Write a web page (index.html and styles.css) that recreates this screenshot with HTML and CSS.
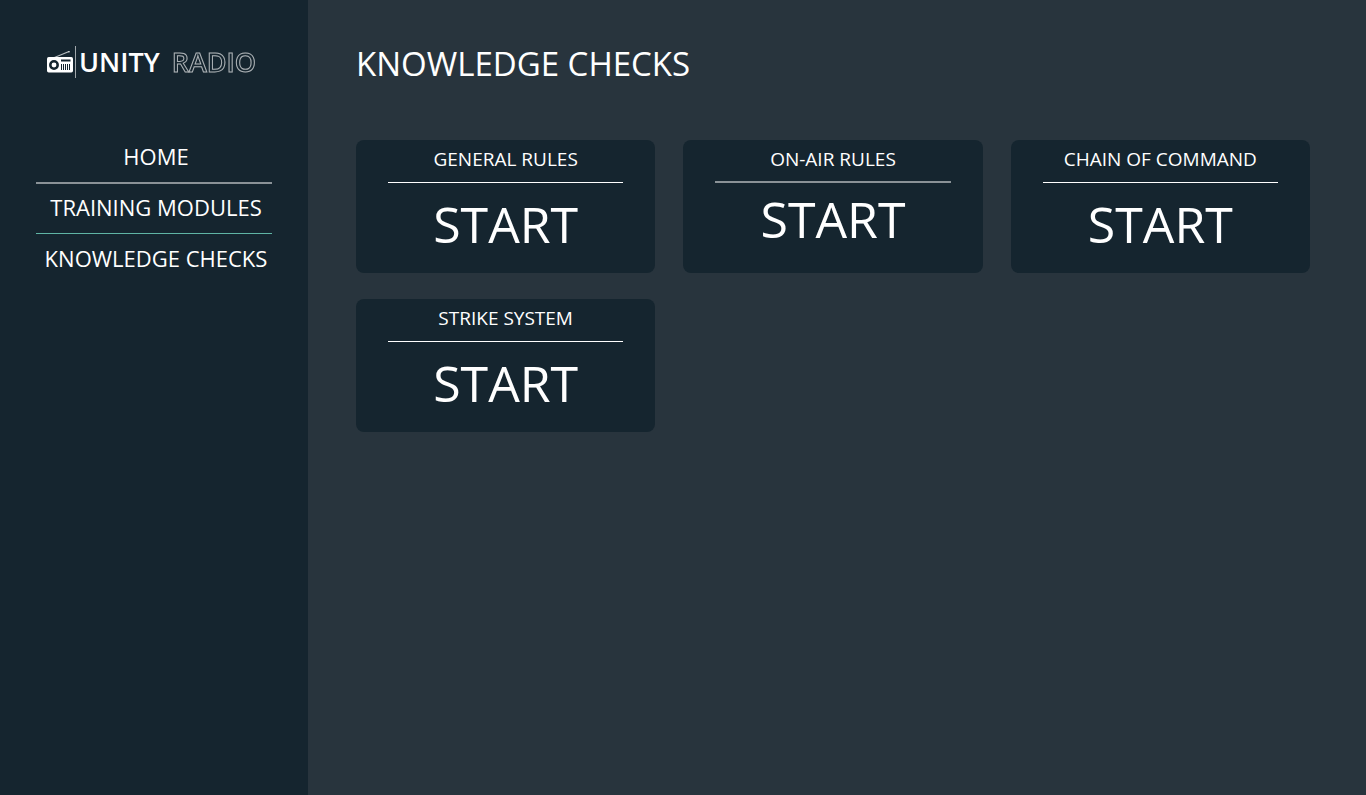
FILE: index.html
```html
<!DOCTYPE html>
<html lang="en">
<head>
<meta charset="utf-8">
<meta name="viewport" content="width=device-width, initial-scale=1">
<title>Unity Radio – Knowledge Checks</title>
<link rel="stylesheet" href="styles.css">
</head>
<body>
<div class="layout">
  <aside class="sidebar">
    <a class="logo" href="#">
      <svg class="logo-icon" viewBox="0 0 27 24" aria-hidden="true">
        <path d="M5 8.500 22 1.500" stroke="#b8bec1" stroke-width="1.200" fill="none"/>
        <circle cx="22" cy="1.700" r=".8" fill="#dfe2e3"/>
        <rect x="0" y="7" width="26" height="15.500" rx="1.700" fill="#fff"/>
        <circle cx="7" cy="15" r="3.700" fill="none" stroke="#15252f" stroke-width="2.500"/>
        <rect x="14" y="9.500" width="9.500" height="2" fill="#15252f"/>
        <path d="M14.500 14v6M16.500 14v6M18.500 14v6M20.500 14v6M22.500 14v6" stroke="#15252f" stroke-width="1"/>
      </svg>
      <span class="logo-rule"></span>
      <span class="logo-solid">UNITY</span>
      <span class="logo-outline">RADIO</span>
    </a>
    <nav class="nav">
      <a class="nav-link" href="#">HOME</a>
      <a class="nav-link nav-link-muted" href="#">TRAINING MODULES</a>
      <a class="nav-link nav-link-accent" href="#">KNOWLEDGE CHECKS</a>
    </nav>
  </aside>
  <main class="main">
    <h1 class="title">KNOWLEDGE CHECKS</h1>
    <div class="cards">
      <section class="card">
        <h2 class="card-title">GENERAL RULES</h2>
        <button class="start" type="button">START</button>
      </section>
      <section class="card card-raised">
        <h2 class="card-title">ON-AIR RULES</h2>
        <button class="start" type="button">START</button>
      </section>
      <section class="card">
        <h2 class="card-title">CHAIN OF COMMAND</h2>
        <button class="start" type="button">START</button>
      </section>
      <section class="card">
        <h2 class="card-title">STRIKE SYSTEM</h2>
        <button class="start" type="button">START</button>
      </section>
    </div>
  </main>
</div>
</body>
</html>
```
FILE: styles.css
```css
* {
  box-sizing: border-box;
}

body {
  margin: 0;
  background: #28343d;
  color: #fff;
  font-family: "Open Sans", "Noto Sans", sans-serif;
}

.layout {
  display: flex;
  min-height: 100vh;
}

.sidebar {
  flex: none;
  width: 308px;
  padding: 46px 36px;
  background: #15252f;
}

.logo {
  display: flex;
  align-items: center;
  height: 32px;
  padding-left: 11px;
  color: #fff;
  font-size: 27px;
  font-weight: 600;
  line-height: 32px;
  text-decoration: none;
}

.logo-icon {
  flex: none;
  width: 27px;
  height: 24px;
}

.logo-rule {
  width: 1px;
  height: 32px;
  margin: 0 3px 0 1px;
  background: #a0a7ab;
}

.logo-outline {
  margin-left: 12px;
  color: transparent;
  opacity: 0.65;
  will-change: opacity;
  -webkit-text-stroke: 1px #fff;
}

.nav {
  margin-top: 53px;
}

.nav-link {
  display: block;
  height: 51px;
  padding-left: 4px;
  color: #fff;
  font-size: 22px;
  line-height: 50px;
  text-align: center;
  text-decoration: none;
}

.nav-link-muted {
  border-top: 2px solid #8a9297;
  line-height: 46px;
}

.nav-link-accent {
  border-top: 1px solid #5fb5a5;
  line-height: 48px;
}

.main {
  flex: 1;
  padding: 40px 56px 40px 48px;
}

.title {
  margin: 0;
  font-size: 33px;
  font-weight: 400;
  line-height: 48px;
}

.cards {
  display: grid;
  grid-template-columns: repeat(3, 1fr);
  gap: 26px 28px;
  margin-top: 52px;
}

.card {
  min-height: 133px;
  padding: 0 32px;
  border-radius: 8px;
  background: #15252f;
  text-align: center;
}

.card-title {
  margin: 0;
  padding-bottom: 4px;
  border-bottom: 1px solid #fff;
  font-size: 19px;
  font-weight: 400;
  line-height: 38px;
}

.start {
  width: 100%;
  margin-top: 7px;
  padding: 0;
  border: 0;
  background: none;
  color: #fff;
  font-family: inherit;
  font-size: 50px;
  line-height: 68px;
  cursor: pointer;
}

.card-raised .card-title {
  padding-bottom: 3px;
  border-bottom: 2px solid #8a9297;
}

.card-raised .start {
  margin-top: 2px;
}
```
